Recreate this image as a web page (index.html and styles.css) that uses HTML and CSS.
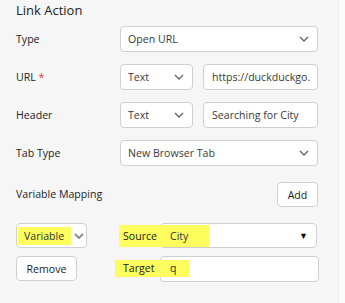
FILE: index.html
```html
<!DOCTYPE html>
<html>
<head>
<meta charset="utf-8">
<link rel="stylesheet" href="styles.css">
</head>
<body>
<div class="panel">
  <h2 class="title">Link Action</h2>
  <div class="form">
    <label class="lbl">Type</label>
    <div class="field sel wide"><span>Open URL</span><svg class="chev" viewBox="0 0 10 6"><path d="M1 1l4 4 4-4"/></svg></div>

    <label class="lbl">URL <span class="req">*</span></label>
    <div class="pair">
      <div class="field sel small"><span>Text</span><svg class="chev" viewBox="0 0 10 6"><path d="M1 1l4 4 4-4"/></svg></div>
      <div class="field inp"><span>https://duckduckgo.</span></div>
    </div>

    <label class="lbl">Header</label>
    <div class="pair">
      <div class="field sel small"><span>Text</span><svg class="chev" viewBox="0 0 10 6"><path d="M1 1l4 4 4-4"/></svg></div>
      <div class="field inp"><span>Searching for City</span></div>
    </div>

    <label class="lbl">Tab Type</label>
    <div class="field sel wide"><span>New Browser Tab</span><svg class="chev" viewBox="0 0 10 6"><path d="M1 1l4 4 4-4"/></svg></div>

    <label class="lbl vm">Variable Mapping</label>
    <div class="addwrap"><button class="btn add">Add</button></div>
  </div>

  <div class="mapping">
    <div class="field varsel"><span class="hl hl-var">Variable</span><svg class="chev" viewBox="0 0 10 6"><path d="M1 1l4 4 4-4"/></svg></div>
    <div class="mlbl"><span class="hl hl-src">Source</span></div>
    <div class="field srcsel"><span class="hl hl-city">City</span><span class="tri">&#9660;</span></div>

    <button class="btn remove">Remove</button>
    <div class="mlbl"><span class="hl hl-tgt">Target</span></div>
    <div class="field tgtinp"><span class="hl hl-q">q</span></div>
  </div>
</div>
</body>
</html>
```
FILE: styles.css
```css
html, body {
  margin: 0;
  padding: 0;
  background: #fbfbfb;
}
body {
  font-family: "Open Sans", "Noto Sans", sans-serif;
  font-size: 10.6px;
  color: #222;
}
.panel {
  width: 339px;
  height: 303px;
  background: #f6f6f6;
  padding: 0 0 0 16px;
  box-sizing: border-box;
  border-right: 1px solid #ececec;
}
.title {
  margin: 0;
  padding-top: 1px;
  height: 25px;
  font-size: 13px;
  font-weight: normal;
  line-height: 19px;
  color: #222;
}
.form {
  display: grid;
  grid-template-columns: 104px 198px;
  grid-auto-rows: 26px;
  row-gap: 12px;
  align-items: center;
}
.lbl {
  color: #222;
}
.req {
  color: #e53935;
}
.field {
  box-sizing: border-box;
  height: 26px;
  background: #fff;
  border: 1px solid #cfcfcf;
  border-radius: 4px;
  display: flex;
  align-items: center;
  color: #3a3a3a;
  white-space: nowrap;
  overflow: hidden;
}
.sel {
  padding: 0 8px 0 7px;
  justify-content: space-between;
}
.wide {
  width: 198px;
}
.pair {
  display: flex;
  gap: 10px;
}
.small {
  width: 73px;
}
.inp {
  width: 115px;
  padding: 0 6px 0 8px;
}
.chev {
  width: 10px;
  height: 6px;
  flex: none;
  fill: none;
  stroke: #666;
  stroke-width: 1.4;
}
.form .vm {
  align-self: center;
  margin-top: 6px;
}
.form .addwrap {
  display: flex;
  justify-content: flex-end;
  margin-top: 7px;
}
.btn {
  box-sizing: border-box;
  height: 25px;
  background: #fff;
  border: 1px solid #cfcfcf;
  border-radius: 4px;
  font-family: inherit;
  font-size: 10.6px;
  color: #222;
  padding: 0;
}
.add {
  width: 41px;
}
.mapping {
  margin-top: 19px;
  display: grid;
  grid-template-columns: 99px 45px 159px;
  grid-template-rows: 25px 25px;
  row-gap: 8px;
  align-items: center;
}
.hl {
  background: #fdfd5e;
  color: #333;
  box-sizing: border-box;
}
.varsel {
  width: 71px;
  height: 25px;
  padding: 0 2px 0 1px;
  justify-content: space-between;
  overflow: visible;
}
.varsel .chev {
  stroke: #888;
  stroke-width: 1.8;
}
.hl-var {
  height: 18px;
  line-height: 18px;
  width: 53px;
  padding-left: 6px;
}
.mlbl {
  display: flex;
  justify-content: flex-end;
}
.hl-src {
  height: 22px;
  line-height: 22px;
  width: 41px;
  padding-left: 4px;
  color: #222;
}
.hl-tgt {
  height: 17px;
  line-height: 17px;
  width: 45px;
  padding-left: 8px;
  color: #222;
}
.srcsel {
  width: 157px;
  height: 25px;
  padding: 0 8px 0 0;
  justify-content: space-between;
  overflow: visible;
}
.hl-city {
  height: 22px;
  line-height: 22px;
  margin-left: -1px;
  width: 49px;
  padding-left: 10px;
}
.tri {
  font-size: 9px;
  color: #111;
}
.remove {
  width: 61px;
}
.tgtinp {
  width: 159px;
  height: 26px;
  padding: 0;
  overflow: visible;
}
.hl-q {
  height: 17px;
  line-height: 17px;
  margin-left: -1px;
  width: 29px;
  padding-left: 10px;
}
```
